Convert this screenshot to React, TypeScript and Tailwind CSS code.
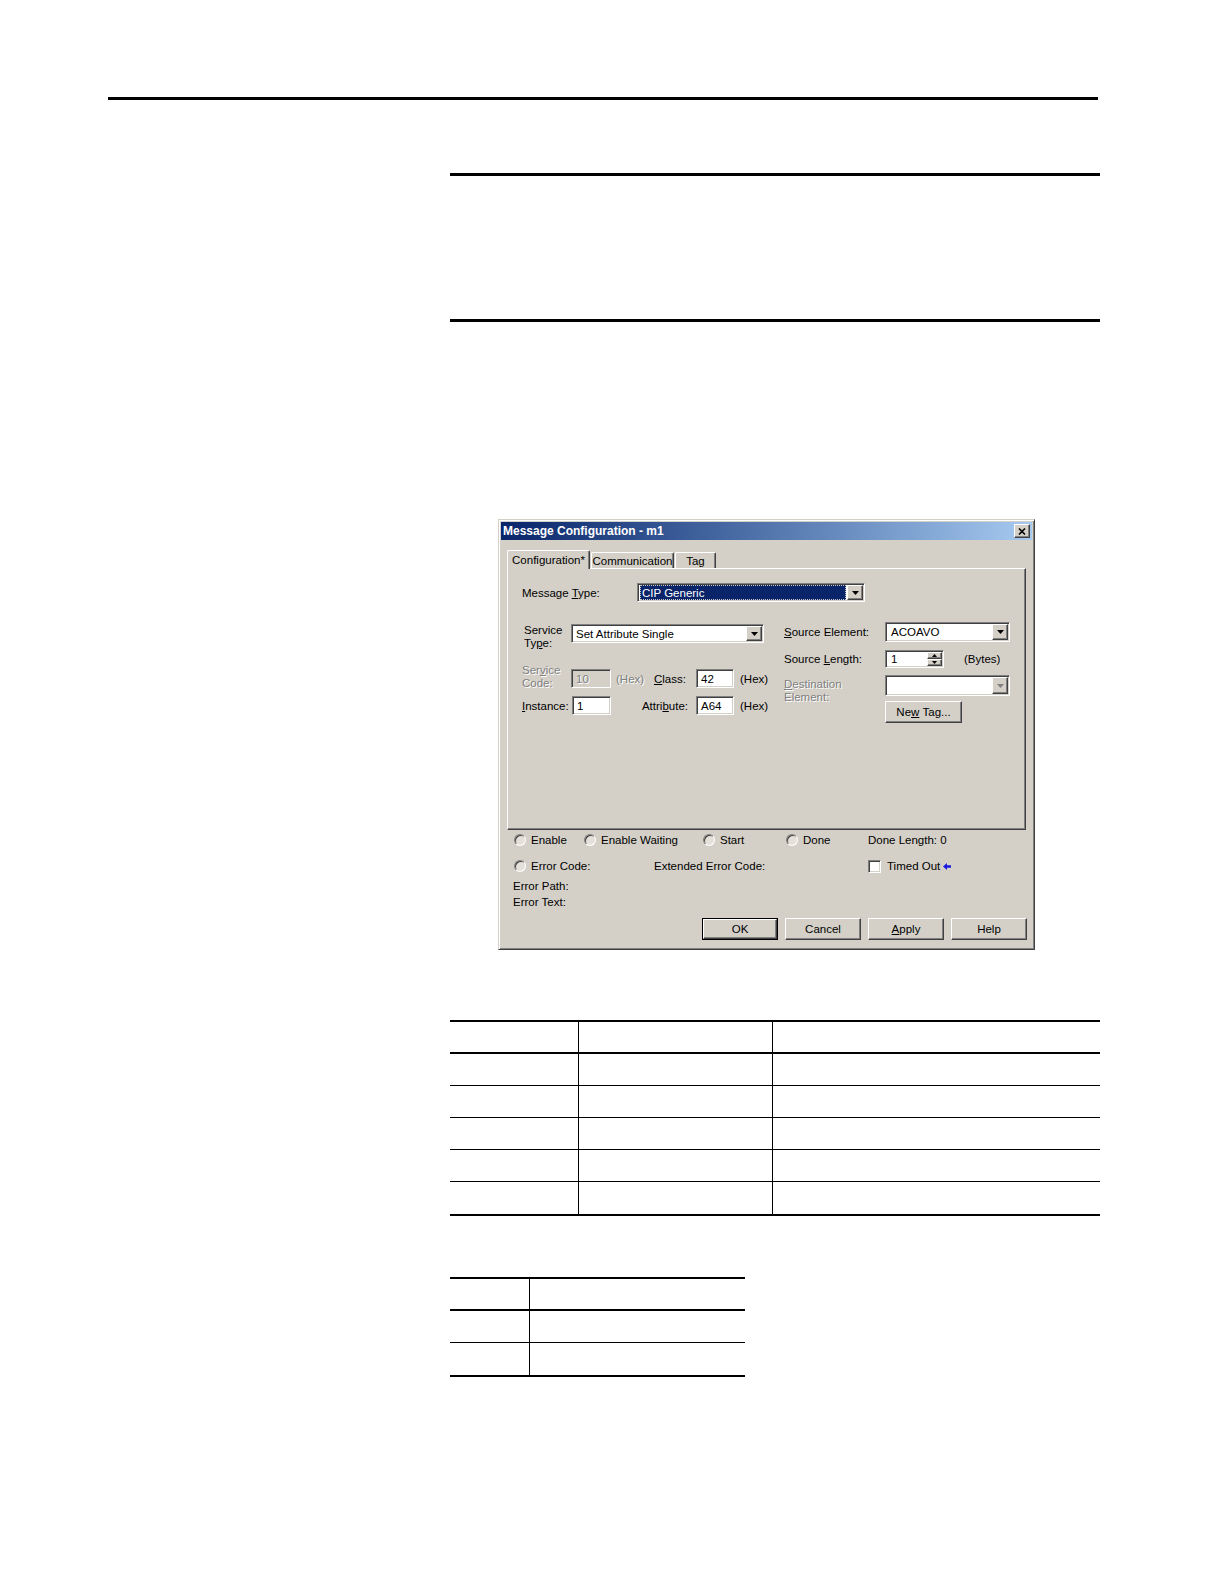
import React from "react";

const sunken =
  "border border-t-[#808080] border-l-[#808080] border-r-white border-b-white shadow-[inset_1px_1px_0_#404040,inset_-1px_-1px_0_#d4d0c8]";
const raised =
  "border border-t-white border-l-white border-r-[#404040] border-b-[#404040] shadow-[inset_-1px_-1px_0_#808080]";
const dimText = "text-[#808080] [text-shadow:1px_1px_0_#ffffff]";

function DownArrow({ disabled }: { disabled?: boolean }) {
  return (
    <svg width="7" height="4" viewBox="0 0 7 4">
      <path d="M0 0h7L3.5 4z" fill={disabled ? "#808080" : "#000000"} />
    </svg>
  );
}

function Combo({
  className,
  children,
  disabled,
}: {
  className: string;
  children?: React.ReactNode;
  disabled?: boolean;
}) {
  return (
    <div className={`${sunken} ${className} flex items-stretch bg-white p-[1px]`}>
      <div className="flex-1 flex items-center min-w-0">{children}</div>
      <div className={`${raised} w-[16px] bg-[#d4d0c8] flex items-center justify-center`}>
        <DownArrow disabled={disabled} />
      </div>
    </div>
  );
}

function Field({ className, children, disabled }: { className: string; children?: React.ReactNode; disabled?: boolean }) {
  return (
    <div
      className={`${sunken} ${className} flex items-center pl-[4px] ${
        disabled ? "bg-[#d4d0c8] text-[#808080]" : "bg-white"
      }`}
    >
      {children}
    </div>
  );
}

function Radio() {
  return (
    <span className="inline-block w-[12px] h-[12px] rounded-full border border-t-[#808080] border-l-[#808080] border-r-white border-b-white bg-[#e4e1da] shadow-[inset_1px_1px_0_#404040]" />
  );
}

function Button({ children, isDefault }: { children: React.ReactNode; isDefault?: boolean }) {
  return (
    <div className={`w-[76px] h-[22px] ${isDefault ? "border border-black" : ""}`}>
      <div className={`${raised} h-full bg-[#d4d0c8] flex items-center justify-center`}>{children}</div>
    </div>
  );
}

function MessageDialog() {
  return (
    <div className="w-[537px] h-[431px] bg-[#d4d0c8] border border-t-[#d4d0c8] border-l-[#d4d0c8] border-r-[#404040] border-b-[#404040] shadow-[inset_1px_1px_0_#ffffff,inset_-1px_-1px_0_#808080] p-[2px] flex flex-col text-[11.5px] leading-[14px] text-black">
      {/* Title bar */}
      <div className="h-[18px] flex items-center justify-between bg-linear-to-r from-[#0a246a] to-[#a6caf0] px-[2px]">
        <span className="text-white font-bold text-[12px]">Message Configuration - m1</span>
        <div className={`${raised} w-[16px] h-[14px] bg-[#d4d0c8] flex items-center justify-center`}>
          <svg width="8" height="7" viewBox="0 0 8 7">
            <path d="M1 0.5L7 6.5M7 0.5L1 6.5" stroke="#000000" strokeWidth="1.6" />
          </svg>
        </div>
      </div>

      <div className="flex-1 flex flex-col pl-[6px] pr-[4px]">
        {/* Tabs */}
        <div className="mt-[10px] flex items-end h-[18px] relative z-10">
          <div className="w-[83px] h-[19px] -mb-[1px] bg-[#d4d0c8] border-t border-l border-r border-t-white border-l-white border-r-[#404040] shadow-[inset_-1px_0_0_#808080] rounded-t-[2px] flex items-center justify-center">
            Configuration*
          </div>
          <div className="ml-[1px] w-[83px] h-[16px] bg-[#d4d0c8] border-t border-l border-r border-t-white border-l-white border-r-[#404040] shadow-[inset_-1px_0_0_#808080] rounded-t-[2px] flex items-center justify-center">
            Communication
          </div>
          <div className="ml-[1px] w-[41px] h-[16px] bg-[#d4d0c8] border-t border-l border-r border-t-white border-l-white border-r-[#404040] shadow-[inset_-1px_0_0_#808080] rounded-t-[2px] flex items-center justify-center">
            Tag
          </div>
        </div>

        {/* Tab panel */}
        <div className="w-[519px] h-[262px] border border-t-white border-l-white border-r-[#404040] border-b-[#404040] shadow-[inset_-1px_-1px_0_#808080] pl-[14px] pt-[14px]">
          <div className="flex items-center h-[19px]">
            <div className="w-[115px]">
              Message <span className="underline">T</span>ype:
            </div>
            <Combo className="w-[228px] h-[19px]">
              <div className="h-[15px] flex-1 mx-[1px] bg-[#0a246a] text-white border border-dotted border-[#c8c8c8] flex items-center pl-[1px]">
                CIP Generic
              </div>
            </Combo>
          </div>

          <div className="mt-[20px] flex">
            {/* Left column */}
            <div className="w-[262px] flex flex-col pt-[2px]">
              <div className="flex h-[19px]">
                <div className="w-[49px] pl-[2px] leading-[13px]">
                  Service
                  <br />
                  Ty<span className="underline">p</span>e:
                </div>
                <Combo className="w-[193px] h-[19px]">
                  <span className="pl-[3px]">Set Attribute Single</span>
                </Combo>
              </div>

              <div className="mt-[26px] flex items-center h-[19px]">
                <div className={`w-[49px] leading-[13px] -mt-[3px] ${dimText}`}>
                  Ser<span className="underline">v</span>ice
                  <br />
                  Code:
                </div>
                <Field className="w-[40px] h-[19px]" disabled>
                  <span className={dimText}>10</span>
                </Field>
                <div className={`w-[43px] pl-[5px] ${dimText}`}>(Hex)</div>
                <div className="w-[42px]">
                  <span className="underline">C</span>lass:
                </div>
                <Field className="w-[38px] h-[19px]">42</Field>
                <div className="pl-[6px]">(Hex)</div>
              </div>

              <div className="mt-[8px] flex items-center h-[19px]">
                <div className="w-[50px]">
                  <span className="underline">I</span>nstance:
                </div>
                <Field className="w-[39px] h-[19px]">1</Field>
                <div className="w-[85px] text-right pr-[8px]">
                  Attri<span className="underline">b</span>ute:
                </div>
                <Field className="w-[38px] h-[19px]">A64</Field>
                <div className="pl-[6px]">(Hex)</div>
              </div>
            </div>

            {/* Right column */}
            <div className="flex flex-col">
              <div className="flex items-center h-[20px]">
                <div className="w-[101px]">
                  <span className="underline">S</span>ource Element:
                </div>
                <Combo className="w-[125px] h-[20px]">
                  <span className="pl-[4px]">ACOAVO</span>
                </Combo>
              </div>

              <div className="mt-[8px] flex items-center h-[18px]">
                <div className="w-[101px]">
                  Source <span className="underline">L</span>ength:
                </div>
                <div className={`${sunken} w-[59px] h-[18px] bg-white flex items-stretch p-[1px]`}>
                  <div className="flex-1 flex items-center pl-[4px]">1</div>
                  <div className="w-[15px] flex flex-col">
                    <div className={`${raised} flex-1 bg-[#d4d0c8] flex items-center justify-center`}>
                      <svg width="5" height="3" viewBox="0 0 5 3">
                        <path d="M0 3h5L2.5 0z" fill="#000000" />
                      </svg>
                    </div>
                    <div className={`${raised} flex-1 bg-[#d4d0c8] flex items-center justify-center`}>
                      <svg width="5" height="3" viewBox="0 0 5 3">
                        <path d="M0 0h5L2.5 3z" fill="#000000" />
                      </svg>
                    </div>
                  </div>
                </div>
                <div className="ml-[20px]">(Bytes)</div>
              </div>

              <div className="mt-[7px] flex h-[21px]">
                <div className={`w-[101px] leading-[13px] pt-[3px] ${dimText}`}>
                  <span className="underline">D</span>estination
                  <br />
                  Element:
                </div>
                <Combo className="w-[125px] h-[21px]" disabled />
              </div>

              <div className="mt-[5px] flex">
                <div className="w-[101px]" />
                <div className={`${raised} w-[77px] h-[22px] bg-[#d4d0c8] flex items-center justify-center`}>
                  Ne<span className="underline">w</span>&nbsp;Tag...
                </div>
              </div>
            </div>
          </div>
        </div>

        {/* Status area */}
        <div className="ml-[7px] mt-[3px] flex items-center h-[14px]">
          <div className="w-[70px] flex items-center gap-[5px]">
            <Radio />
            <span>Enable</span>
          </div>
          <div className="w-[119px] flex items-center gap-[5px]">
            <Radio />
            <span>Enable Waiting</span>
          </div>
          <div className="w-[83px] flex items-center gap-[5px]">
            <Radio />
            <span>Start</span>
          </div>
          <div className="w-[82px] flex items-center gap-[5px]">
            <Radio />
            <span>Done</span>
          </div>
          <span>Done Length:&nbsp;0</span>
        </div>

        <div className="ml-[7px] mt-[12px] flex items-center h-[14px]">
          <div className="w-[140px] flex items-center gap-[5px]">
            <Radio />
            <span>Error Code:</span>
          </div>
          <div className="w-[214px]">Extended Error Code:</div>
          <div className={`${sunken} w-[13px] h-[13px] bg-white`} />
          <span className="ml-[6px]">Timed Out</span>
          <svg className="ml-[3px]" width="8" height="7" viewBox="0 0 8 7">
            <path d="M0 3.5L4 0V2.2H8V4.8H4V7z" fill="#1a1adc" />
          </svg>
        </div>

        <div className="ml-[6px] mt-[6px] h-[14px] flex items-center">Error Path:</div>
        <div className="ml-[6px] mt-[2px] h-[14px] flex items-center">Error Text:</div>

        <div className="mt-[9px] flex justify-end gap-[7px] pr-[1px]">
          <Button isDefault>OK</Button>
          <Button>Cancel</Button>
          <Button>
            <span className="underline">A</span>pply
          </Button>
          <Button>Help</Button>
        </div>
      </div>
    </div>
  );
}

function FieldTable() {
  const rows = [0, 1, 2, 3, 4, 5];
  return (
    <div className="mt-[70px] border-t-2 border-b-2 border-black">
      {rows.map((i) => (
        <div
          key={i}
          className={
            i === 0
              ? "grid grid-cols-[128px_194px_1fr] h-[32px] border-b-2 border-black"
              : i < 5
                ? "grid grid-cols-[128px_194px_1fr] h-[32px] border-b border-black"
                : "grid grid-cols-[128px_194px_1fr] h-[32px]"
          }
        >
          <div />
          <div className="border-l border-black" />
          <div className="border-l border-black" />
        </div>
      ))}
    </div>
  );
}

function SmallTable() {
  return (
    <div className="mt-[61px] w-[295px] border-t-2 border-b-2 border-black">
      <div className="grid grid-cols-[79px_1fr] h-[32px] border-b-2 border-black">
        <div />
        <div className="border-l border-black" />
      </div>
      <div className="grid grid-cols-[79px_1fr] h-[32px] border-b border-black">
        <div />
        <div className="border-l border-black" />
      </div>
      <div className="grid grid-cols-[79px_1fr] h-[32px]">
        <div />
        <div className="border-l border-black" />
      </div>
    </div>
  );
}

export default function App() {
  return (
    <div className="w-[1224px] h-[1584px] bg-white font-['Liberation_Sans',Arial,sans-serif] overflow-hidden">
      <div className="pt-[97px] pl-[108px]">
        <div className="h-[3px] w-[990px] bg-black" />
      </div>
      <div className="ml-[450px] w-[650px]">
        <div className="mt-[73px] h-[3px] bg-black" />
        <div className="mt-[143px] h-[3px] bg-black" />
        <div className="mt-[197px] ml-[48px]">
          <MessageDialog />
        </div>
        <FieldTable />
        <SmallTable />
      </div>
    </div>
  );
}
